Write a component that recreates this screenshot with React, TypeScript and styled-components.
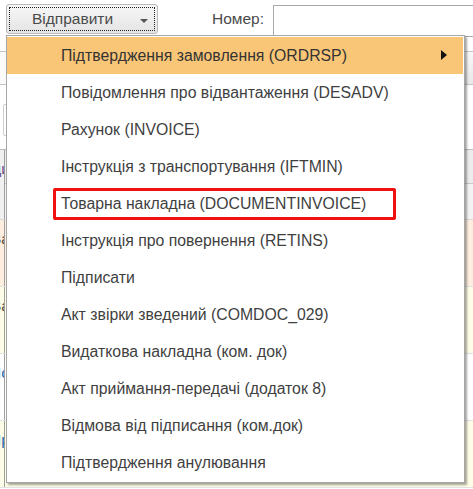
import React from 'react'
import styled, { createGlobalStyle, css } from 'styled-components'

const GlobalStyle = createGlobalStyle`
  html, body {
    margin: 0;
    padding: 0;
    background: #fff;
  }
  body {
    font-family: 'Liberation Sans', Arial, sans-serif;
    font-size: 15.5px;
    color: #404040;
    overflow: hidden;
  }
`

const menuItems = [
  'Підтвердження замовлення (ORDRSP)',
  'Повідомлення про відвантаження (DESADV)',
  'Рахунок (INVOICE)',
  'Інструкція з транспортування (IFTMIN)',
  'Товарна накладна (DOCUMENTINVOICE)',
  'Інструкція про повернення (RETINS)',
  'Підписати',
  'Акт звірки зведений (COMDOC_029)',
  'Видаткова накладна (ком. док)',
  'Акт приймання-передачі (додаток 8)',
  'Відмова від підписання (ком.док)',
  'Підтвердження анулювання',
]

type RowTone = 'peach' | 'yellow' | 'white'

const rows: { tone: RowTone; text: string; color?: string }[] = [
  { tone: 'peach', text: 'Ва', color: '#5a4a3a' },
  { tone: 'yellow', text: 'Ва', color: '#5a4a3a' },
  { tone: 'white', text: 'Іо', color: '#2a6ab0' },
  { tone: 'yellow', text: 'Ір', color: '#2a6ab0' },
]

const App: React.FC = () => {
  return (
    <Page>
      <GlobalStyle />
      <TopBar>
        <SendButton>
          <FocusRing>
            <span>Відправити</span>
            <Caret />
          </FocusRing>
        </SendButton>
        <FieldLabel>Номер:</FieldLabel>
        <TextInput />
      </TopBar>

      <CommandBar>
        <Spacer />
        <BarButton>В</BarButton>
      </CommandBar>

      <FilterArea>
        <MiniInput />
      </FilterArea>

      <Table>
        <HeadRow>
          <EdgeCell>
            <EdgeText color="#6a4a8a">ди</EdgeText>
          </EdgeCell>
          <HeadRight>
            <HeadSub />
            <HeadSub light />
          </HeadRight>
        </HeadRow>
        {rows.map((r, i) => (
          <BodyRow key={i} tone={r.tone}>
            <EdgeCell>
              <EdgeText color={r.color}>{r.text}</EdgeText>
            </EdgeCell>
            <div />
          </BodyRow>
        ))}
      </Table>

      <Menu>
        {menuItems.map((label, i) => (
          <MenuItem key={label} active={i === 0}>
            {i === 4 ? <Marked>{label}</Marked> : <span>{label}</span>}
            {i === 0 && <SubArrow />}
          </MenuItem>
        ))}
      </Menu>
    </Page>
  )
}

const Page = styled.div`
  position: relative;
  width: 473px;
  height: 489px;
  overflow: hidden;
  background: #fff;
`

const TopBar = styled.div`
  display: flex;
  align-items: center;
  height: 40px;
  padding: 4px 0 0 6px;
  box-sizing: border-box;
`

const SendButton = styled.div`
  width: 152px;
  height: 30px;
  box-sizing: border-box;
  border: 1px solid #b9b9b9;
  border-radius: 3px;
  background: linear-gradient(#f7f7f7, #e4e4e4);
  padding: 2px;
  align-self: flex-start;
`

const FocusRing = styled.div`
  height: 100%;
  box-sizing: border-box;
  border: 1px dotted #222;
  display: flex;
  align-items: center;
  padding: 0 0 0 22px;
  color: #4a4a4a;
  position: relative;
`

const Caret = styled.span`
  position: absolute;
  right: 6px;
  top: 11px;
  width: 0;
  height: 0;
  border-left: 4px solid transparent;
  border-right: 4px solid transparent;
  border-top: 4px solid #555;
`

const FieldLabel = styled.span`
  margin-left: 54px;
  margin-top: -6px;
  color: #4a4a4a;
`

const TextInput = styled.div`
  margin-left: 9px;
  align-self: flex-start;
  margin-top: 1px;
  flex: 1;
  height: 30px;
  border: 1px solid #a9a9a9;
  border-right: none;
  background: #fff;
`

const CommandBar = styled.div`
  display: flex;
  height: 32px;
  margin-top: 11px;
  border-top: 1px solid #c4c4c4;
  border-bottom: 1px solid #c4c4c4;
  background: #fafafa;
`

const Spacer = styled.div`
  flex: 1;
`

const BarButton = styled.div`
  width: 30px;
  padding-left: 6px;
  display: flex;
  align-items: center;
  color: #4a4a4a;
  font-size: 16px;
  background: linear-gradient(#f8f8f8, #e8e8e8);
`

const FilterArea = styled.div`
  height: 64px;
  background: #fff;
  padding: 19px 0 0 3px;
  box-sizing: border-box;
`

const MiniInput = styled.div`
  width: 10px;
  height: 30px;
  border: 1px solid #cfcfcf;
  border-radius: 2px;
`

const Table = styled.div`
  border-top: 1px solid #bdbdbd;
`

const HeadRow = styled.div`
  display: grid;
  grid-template-columns: 5px 1fr;
  height: 69px;
  background: #f0f0f0;
  border-bottom: 1px solid #d8d8d8;
`

const HeadRight = styled.div`
  display: grid;
  grid-template-rows: 34px 35px;
`

const HeadSub = styled.div<{ light?: boolean }>`
  background: ${(p) => (p.light ? '#f3f3f3' : '#ececec')};
  border-bottom: ${(p) => (p.light ? 'none' : '1px solid #c8c8c8')};
`

const toneBg: Record<RowTone, string> = {
  peach: '#fdeee0',
  yellow: '#fdfce6',
  white: '#ffffff',
}

const BodyRow = styled.div<{ tone: RowTone }>`
  display: grid;
  grid-template-columns: 5px 1fr;
  height: 66px;
  background: ${(p) => toneBg[p.tone]};
  border-bottom: 1px solid #e2e2e2;
`

const EdgeCell = styled.div`
  border-right: 1px solid #9f9f9f;
  overflow: hidden;
  display: flex;
  align-items: flex-start;
  justify-content: flex-end;
  padding-top: 10px;
`

const EdgeText = styled.span<{ color?: string }>`
  white-space: nowrap;
  color: ${(p) => p.color || '#444'};
  margin-right: -6px;
`

const Menu = styled.div`
  position: absolute;
  left: 6px;
  top: 35px;
  width: 459px;
  box-sizing: border-box;
  padding: 1px 1px 1px 0;
  background: #fff;
  border: 1px solid #a6a6a6;
  box-shadow: 2px 2px 2px rgba(0, 0, 0, 0.35);
`

const MenuItem = styled.div<{ active?: boolean }>`
  position: relative;
  height: 37px;
  display: flex;
  align-items: center;
  padding-left: 54px;
  color: #3f3f3f;
  font-size: 15.8px;
  white-space: nowrap;
  ${(p) =>
    p.active &&
    css`
      background: #f9c677;
      color: #333;
    `}
`

const Marked = styled.span`
  margin-left: -8px;
  width: 343px;
  height: 32px;
  box-sizing: border-box;
  border: 3px solid #f01010;
  border-radius: 2px;
  padding-left: 5px;
  display: flex;
  align-items: center;
`

const SubArrow = styled.span`
  position: absolute;
  right: 16px;
  top: 13px;
  width: 0;
  height: 0;
  border-top: 5px solid transparent;
  border-bottom: 5px solid transparent;
  border-left: 6px solid #111;
`

export default App
